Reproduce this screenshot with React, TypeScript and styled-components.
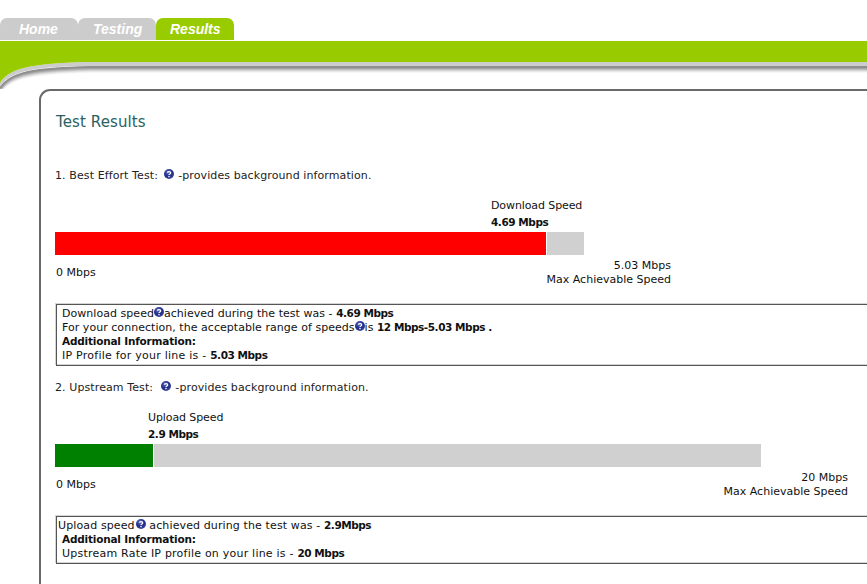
import styled, { createGlobalStyle } from "styled-components";

const GlobalStyle = createGlobalStyle`
  html, body {
    margin: 0;
    padding: 0;
    height: 100%;
    overflow: hidden;
    background: #fff;
  }
  body {
    font-family: "DejaVu Sans", Verdana, sans-serif;
    font-size: 11px;
    color: #111;
  }
`;

const Page = styled.div`
  width: 867px;
  height: 584px;
  padding-top: 18px;
  box-sizing: border-box;
  overflow: hidden;
`;
const TabBar = styled.div`
  display: flex;
  height: 22px;
  margin-bottom: 1px;
`;
const Tab = styled.div<{ $active?: boolean }>`
  width: 78px;
  height: 22px;
  padding-left: ${(props) => (props.$active ? 14 : 15)}px;
  box-sizing: border-box;
  background: ${(props) => (props.$active ? "#99cc00" : "#cccccc")};
  border-radius: 7px 7px 0 0;
  color: #fff;
  font-family: "Liberation Sans", Arial, sans-serif;
  font-size: 14px;
  font-style: italic;
  font-weight: bold;
  line-height: 23px;
  &:first-child {
    padding-left: 19px;
  }
`;
const BannerArt = styled.svg`
  display: block;
  width: 867px;
  height: 48px;
`;
const Panel = styled.div`
  margin-left: 39px;
  height: 500px;
  padding-left: 14px;
  border-top: 2px solid #6a6a6a;
  border-left: 2px solid #6a6a6a;
  border-top-left-radius: 11px;
`;
const Title = styled.h1`
  margin: 0;
  padding: 21px 0 0 1px;
  font-size: 15px;
  font-weight: normal;
  line-height: 20px;
  color: #2a5f63;
  letter-spacing: 0.1px;
`;
const SectionHead = styled.div<{ $top: number }>`
  margin-top: ${(props) => props.$top}px;
  height: 14px;
  line-height: 14px;
  color: #222;
  white-space: pre;
  letter-spacing: 0.1px;
`;
const Strong = styled.b<{ $track?: number }>`
  font-size: 10.5px;
  letter-spacing: ${(props) => props.$track ?? -0.45}px;
`;
const ValueLabel = styled.div<{ $left: number }>`
  margin: 14px 0 1px ${(props) => props.$left}px;
  line-height: 17px;
  letter-spacing: -0.1px;
`;
const Track = styled.div<{ $width: number }>`
  display: flex;
  width: ${(props) => props.$width}px;
  height: 23px;
  background: #d0d0d0;
`;
const Fill = styled.div<{ $width: number; $color: string }>`
  width: ${(props) => props.$width}px;
  background: ${(props) => props.$color};
  border-right: 1px solid #fff;
  box-sizing: content-box;
`;
const Scale = styled.div<{ $width: number }>`
  display: flex;
  justify-content: space-between;
  align-items: center;
  width: ${(props) => props.$width}px;
  margin-top: 4px;
  line-height: 14px;
`;
const ScaleMin = styled.span`
  padding-left: 1px;
`;
const ScaleMax = styled.span`
  text-align: right;
`;
const InfoBox = styled.div`
  margin: 17px -10px 0 1px;
  padding: 1px 0 3px;
  border: 1px solid #555;
  box-shadow: -1px -1px 0 #d4d4d4, inset 0 -1px 0 #d4d4d4;
`;
const InfoLine = styled.div<{ $indent?: number; $track?: number }>`
  height: 14px;
  padding-left: ${(props) => props.$indent ?? 5}px;
  line-height: 14px;
  white-space: pre;
  letter-spacing: ${(props) => props.$track ?? 0.04}px;
`;
const HelpArt = styled.svg<{ $gap?: number; $after?: number }>`
  width: 10px;
  height: 10px;
  margin-left: ${(props) => props.$gap ?? 0}px;
  margin-right: ${(props) => props.$after ?? 0}px;
  vertical-align: 0;
`;

function HelpIcon({ gap, after }: { gap?: number; after?: number }) {
  return (
    <HelpArt $gap={gap} $after={after} viewBox="0 0 10 10">
      <defs>
        <radialGradient id="helpBall" cx="40%" cy="30%" r="75%">
          <stop offset="0%" stopColor="#5f6cc0" />
          <stop offset="55%" stopColor="#1f2d8a" />
          <stop offset="100%" stopColor="#3c4a9c" />
        </radialGradient>
      </defs>
      <circle cx="5" cy="5" r="5" fill="url(#helpBall)" />
      <path
        d="M3.4 3.7 C3.5 2.4 6.7 2.3 6.7 3.9 C6.7 5 5 4.9 5 6.1"
        fill="none"
        stroke="#fff"
        strokeWidth="1.3"
      />
      <rect x="4.3" y="6.9" width="1.4" height="1.3" fill="#fff" />
    </HelpArt>
  );
}

const swoosh = "M0 42 C8 30 22 22 90 21 H867";
const shades = ["#f6f6f6", "#e8e8e8", "#d4d4d4", "#bcbcbc", "#a4a4a4", "#8f8f8f"];

function Banner() {
  return (
    <BannerArt viewBox="0 0 867 48">
      {shades.map((shade, i) => (
        <path
          key={shade}
          d={swoosh}
          fill="none"
          stroke={shade}
          strokeWidth="2"
          transform={`translate(0 ${10 - i})`}
        />
      ))}
      <path d="M0 46 C8 34 22 25 90 25 H867 V21 H90 C22 22 8 30 0 42 Z" fill="#cccccc" />
      <path d="M0 0 H867 V21 H90 C22 22 8 30 0 42 Z" fill="#99cc00" />
    </BannerArt>
  );
}

function App() {
  return (
    <Page>
      <GlobalStyle />
      <TabBar>
        <Tab>Home</Tab>
        <Tab>Testing</Tab>
        <Tab $active>Results</Tab>
      </TabBar>
      <Banner />
      <Panel>
        <Title>Test Results</Title>

        <SectionHead $top={37}>
          1. Best Effort Test: <HelpIcon gap={2} after={1} /> -provides background information.
        </SectionHead>
        <ValueLabel $left={436}>
          Download Speed
          <br />
          <Strong>4.69 Mbps</Strong>
        </ValueLabel>
        <Track $width={529}>
          <Fill $width={491} $color="#ff0000" />
        </Track>
        <Scale $width={616}>
          <ScaleMin>0 Mbps</ScaleMin>
          <ScaleMax>
            5.03 Mbps
            <br />
            Max Achievable Speed
          </ScaleMax>
        </Scale>
        <InfoBox>
          <InfoLine>
            Download speed<HelpIcon />achieved during the test was - <Strong>4.69 Mbps</Strong>
          </InfoLine>
          <InfoLine>
            For your connection, the acceptable range of speeds<HelpIcon />is <Strong>12 Mbps-5.03 Mbps .</Strong>
          </InfoLine>
          <InfoLine>
            <Strong $track={-0.2}>Additional Information:</Strong>
          </InfoLine>
          <InfoLine $track={0.24}>
            IP Profile for your line is - <Strong>5.03 Mbps</Strong>
          </InfoLine>
        </InfoBox>

        <SectionHead $top={15}>
          2. Upstream Test: <HelpIcon gap={4} after={1} /> -provides background information.
        </SectionHead>
        <ValueLabel $left={93}>
          Upload Speed
          <br />
          <Strong>2.9 Mbps</Strong>
        </ValueLabel>
        <Track $width={706}>
          <Fill $width={98} $color="#008000" />
        </Track>
        <Scale $width={793}>
          <ScaleMin>0 Mbps</ScaleMin>
          <ScaleMax>
            20 Mbps
            <br />
            Max Achievable Speed
          </ScaleMax>
        </Scale>
        <InfoBox>
          <InfoLine $indent={1} $track={0.12}>
            Upload speed<HelpIcon gap={1} /> achieved during the test was - <Strong>2.9Mbps</Strong>
          </InfoLine>
          <InfoLine>
            <Strong $track={-0.2}>Additional Information:</Strong>
          </InfoLine>
          <InfoLine $track={0.22}>
            Upstream Rate IP profile on your line is - <Strong>20 Mbps</Strong>
          </InfoLine>
        </InfoBox>
      </Panel>
    </Page>
  );
}

export default App;
